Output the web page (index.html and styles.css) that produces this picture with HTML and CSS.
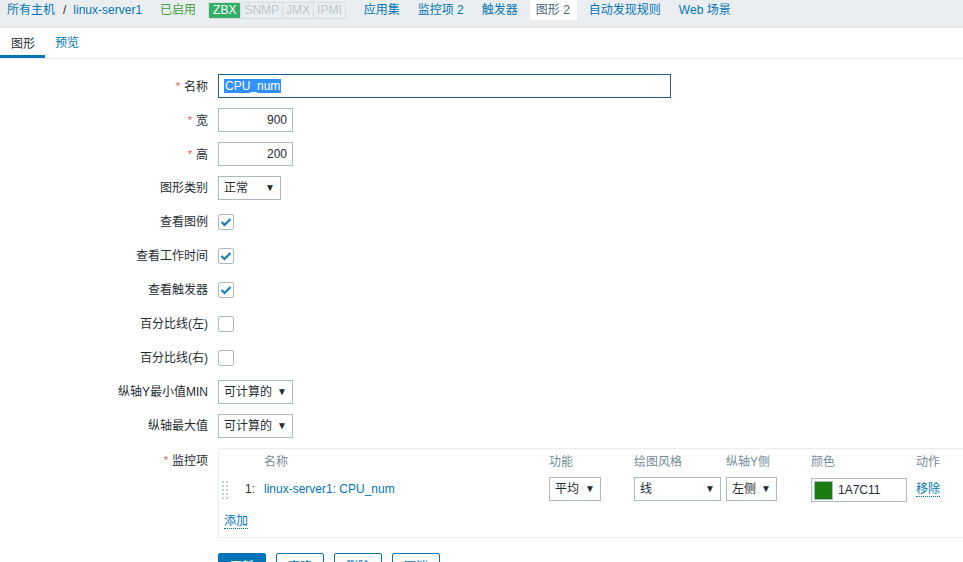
FILE: index.html
```html
<!DOCTYPE html>
<html lang="zh">
<head>
<meta charset="utf-8">
<title>图形</title>
<link rel="stylesheet" href="styles.css">
</head>
<body>
<div class="nav">
  <div class="crumbs"><a class="lnk">所有主机</a><span class="sep">/</span><a class="lnk">linux-server1</a></div>
  <span class="enabled">已启用</span>
  <div class="avail"><span class="badge on">ZBX</span><span class="badge">SNMP</span><span class="badge">JMX</span><span class="badge">IPMI</span></div>
  <a class="lnk item">应用集</a>
  <a class="lnk item">监控项 2</a>
  <a class="lnk item">触发器</a>
  <span class="item current">图形 2</span>
  <a class="lnk item">自动发现规则</a>
  <a class="lnk item">Web 场景</a>
</div>
<div class="tabs">
  <span class="tab active">图形</span>
  <a class="tab lnk">预览</a>
</div>
<div class="form">
  <div class="lbl req">名称</div>
  <div class="field"><div class="input wide focus"><span class="sel">CPU_num</span></div></div>

  <div class="lbl req">宽</div>
  <div class="field"><div class="input num">900</div></div>

  <div class="lbl req">高</div>
  <div class="field"><div class="input num">200</div></div>

  <div class="lbl">图形类别</div>
  <div class="field"><div class="select w62">正常<span class="arr">▼</span></div></div>

  <div class="lbl">查看图例</div>
  <div class="field"><span class="cb"><svg width="12" height="10" viewBox="0 0 12 10"><path d="M1.5 5 L4.5 8 L10.5 2" fill="none" stroke="#1a7dc4" stroke-width="2.2"/></svg></span></div>

  <div class="lbl">查看工作时间</div>
  <div class="field"><span class="cb"><svg width="12" height="10" viewBox="0 0 12 10"><path d="M1.5 5 L4.5 8 L10.5 2" fill="none" stroke="#1a7dc4" stroke-width="2.2"/></svg></span></div>

  <div class="lbl">查看触发器</div>
  <div class="field"><span class="cb"><svg width="12" height="10" viewBox="0 0 12 10"><path d="M1.5 5 L4.5 8 L10.5 2" fill="none" stroke="#1a7dc4" stroke-width="2.2"/></svg></span></div>

  <div class="lbl">百分比线(左)</div>
  <div class="field"><span class="cb"></span></div>

  <div class="lbl">百分比线(右)</div>
  <div class="field"><span class="cb"></span></div>

  <div class="lbl">纵轴Y最小值MIN</div>
  <div class="field"><div class="select w74">可计算的<span class="arr">▼</span></div></div>

  <div class="lbl">纵轴最大值</div>
  <div class="field"><div class="select w74">可计算的<span class="arr">▼</span></div></div>

  <div class="lbl req">监控项</div>
  <div class="field">
    <div class="items">
      <div class="irow head">
        <span></span><span></span><span>名称</span><span>功能</span><span>绘图风格</span><span>纵轴Y侧</span><span>颜色</span><span>动作</span>
      </div>
      <div class="irow data">
        <span class="drag"><svg width="7" height="18" viewBox="0 0 7 18"><g fill="#c5ced3"><rect x="0" y="0" width="2" height="2"/><rect x="4" y="0" width="2" height="2"/><rect x="0" y="4" width="2" height="2"/><rect x="4" y="4" width="2" height="2"/><rect x="0" y="8" width="2" height="2"/><rect x="4" y="8" width="2" height="2"/><rect x="0" y="12" width="2" height="2"/><rect x="4" y="12" width="2" height="2"/><rect x="0" y="16" width="2" height="2"/><rect x="4" y="16" width="2" height="2"/></g></svg></span>
        <span class="no">1:</span>
        <a class="lnk">linux-server1: CPU_num</a>
        <span><span class="select w51">平均<span class="arr">▼</span></span></span>
        <span><span class="select w86">线<span class="arr">▼</span></span></span>
        <span><span class="select w50">左侧<span class="arr">▼</span></span></span>
        <span><span class="color"><span class="swatch"></span>1A7C11</span></span>
        <span><a class="lnk dotted">移除</a></span>
      </div>
      <div class="add"><a class="lnk dotted">添加</a></div>
    </div>
  </div>

  <div></div>
  <div class="field buttons">
    <button class="btn primary">更新</button>
    <button class="btn">克隆</button>
    <button class="btn">删除</button>
    <button class="btn">取消</button>
  </div>
</div>
</body>
</html>
```
FILE: styles.css
```css
html, body {
  margin: 0;
  padding: 0;
  background: #ffffff;
  overflow: hidden;
}
body {
  font-family: "Liberation Sans", "Noto Sans CJK SC", sans-serif;
  font-size: 12px;
  color: #1f2c33;
  line-height: 16px;
}
.lnk {
  color: #0275b8;
  text-decoration: none;
  cursor: pointer;
}
.nav {
  height: 27px;
  background: #ebeef0;
  border-bottom: 1px solid #dfe4e7;
  display: flex;
  align-items: flex-start;
  padding-left: 7px;
  box-sizing: content-box;
}
.nav > * {
  line-height: 20px;
}
.crumbs {
  display: flex;
  margin-right: 18px;
}
.sep {
  margin: 0 7px 0 8px;
  color: #1f2c33;
}
.enabled {
  color: #429e47;
  margin-right: 12px;
}
.avail {
  display: flex;
  margin-top: 2px;
  margin-right: 18px;
  border: 1px solid #d6dde0;
  border-radius: 2px;
  height: 15px;
}
.badge {
  line-height: 15px;
  font-size: 12px;
  padding: 0 3px;
  color: #bcc6cc;
  border-left: 1px solid #d6dde0;
}
.badge:first-child {
  border-left: none;
}
.badge.on {
  background: #34af67;
  color: #ffffff;
  padding: 0 4px;
}
.item {
  margin-right: 18px;
}
.current {
  background: #ffffff;
  color: #4b6777;
  padding: 0 7px 0 6px;
  margin-left: -6px;
  margin-right: 12px;
}
.tabs {
  display: flex;
  height: 30px;
  border-bottom: 1px solid #ebeef0;
  padding-left: 1px;
}
.tab {
  padding: 0 10px;
  line-height: 30px;
  height: 30px;
  box-sizing: border-box;
}
.tab.active {
  color: #1f2c33;
  border-bottom: 3px solid #0275b8;
  padding-top: 1px;
  margin-left: -1px;
  padding-left: 11px;
}
.form {
  display: grid;
  grid-template-columns: 208px 1fr;
  column-gap: 10px;
  row-gap: 10px;
  padding-top: 15px;
}
.lbl {
  text-align: right;
  line-height: 24px;
  height: 24px;
  white-space: nowrap;
}
.lbl.req::before {
  content: "*";
  color: #e45959;
  font-size: 11px;
  margin-right: 4px;
  vertical-align: 1px;
}
.field {
  display: flex;
  align-items: center;
  min-height: 24px;
}
.input {
  height: 24px;
  box-sizing: border-box;
  border: 1px solid #acbbc2;
  padding: 0 5px;
  line-height: 22px;
  background: #fff;
  width: 75px;
}
.input.num {
  text-align: right;
}
.input.wide {
  width: 453px;
}
.input.focus {
  border-color: #1f5f93;
}
.sel {
  background: #3390ff;
  color: #ffffff;
  display: inline-block;
  line-height: 14px;
  padding: 0 1px;
}
.select {
  display: inline-flex;
  align-items: center;
  justify-content: space-between;
  height: 24px;
  box-sizing: border-box;
  border: 1px solid #acbbc2;
  padding: 0 5px 0 5px;
  background: #fff;
  line-height: 22px;
}
.arr {
  font-size: 10px;
  color: #1f2c33;
}
.w62 { width: 63px; }
.w74 { width: 75px; }
.w51 { width: 52px; }
.w86 { width: 87px; }
.w50 { width: 51px; }
.cb {
  display: inline-flex;
  align-items: center;
  justify-content: center;
  width: 16px;
  height: 16px;
  box-sizing: border-box;
  border: 1px solid #acbbc2;
  border-radius: 2px;
  background: #fff;
}
.items {
  width: 760px;
  border: 1px solid #ebeef0;
  border-right: none;
  padding: 4px 0 10px 3px;
  box-sizing: border-box;
  height: 90px;
}
.irow {
  display: grid;
  grid-template-columns: 23px 19px 285px 85px 92px 85px 105px 1fr;
  align-items: center;
}
.irow.head {
  color: #768d99;
  height: 18px;
}
.irow.data {
  margin-top: 4px;
  height: 26px;
}
.drag {
  display: flex;
  align-items: center;
  padding-top: 2px;
}
.no {
  color: #1f2c33;
}
.color {
  display: inline-flex;
  align-items: center;
  width: 96px;
  height: 24px;
  box-sizing: border-box;
  border: 1px solid #acbbc2;
  padding: 0 2px;
  margin-top: 3px;
}
.swatch {
  width: 19px;
  height: 19px;
  box-sizing: border-box;
  background: #1a7c11;
  border: 1px solid #acbbc2;
  margin-right: 5px;
}
.dotted {
  border-bottom: 1px dotted #0275b8;
}
.add {
  margin-top: 12px;
  padding-left: 2px;
  line-height: 16px;
}
.buttons {
  gap: 10px;
  margin-top: 5px;
}
.btn {
  font-family: "Liberation Sans", "Noto Sans CJK SC", sans-serif;
  font-size: 12px;
  height: 24px;
  width: 48px;
  border: 1px solid #0275b8;
  border-radius: 2px;
  background: #fff;
  color: #0275b8;
  padding: 0;
}
.btn.primary {
  background: #0275b8;
  color: #fff;
}
```
